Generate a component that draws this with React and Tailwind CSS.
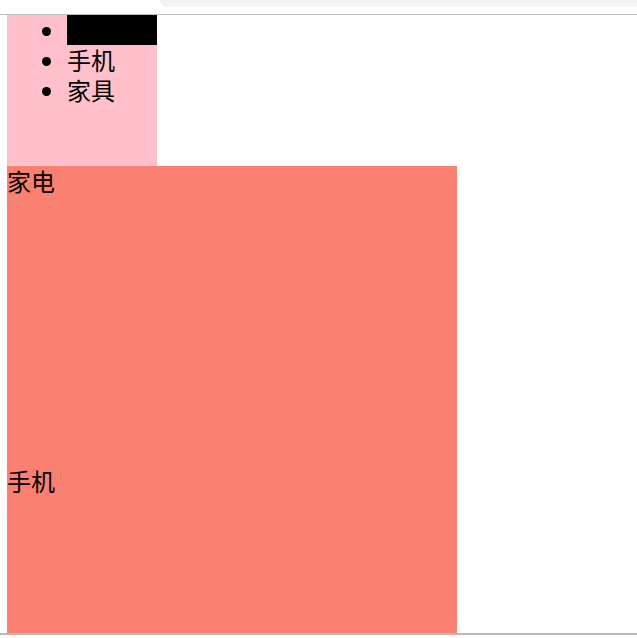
import React from 'react';

const navItems = ['家电', '手机', '家具'];

export default function App() {
  return (
    <div className="h-[638px] overflow-hidden bg-white flex flex-col" style={{ fontFamily: '"Noto Sans CJK SC", "Noto Sans", sans-serif' }}>
      {/* browser top strip */}
      <div className="h-[14px] shrink-0 flex">
        <div className="ml-[160px] h-[7px] flex-1 bg-[#f1f3f4] rounded-bl-[12px]" />
      </div>
      <div className="h-px shrink-0 bg-[#bdbdbd]" />

      {/* page */}
      <div className="flex-1 overflow-hidden pl-[7px] text-[24px] leading-[30px] text-black">
        <nav className="w-[150px] h-[151px] bg-[#ffc0cb]">
          <ul className="list-disc pl-[60px]">
            {navItems.map((item, i) => (
              <li key={item} className={i === 0 ? 'bg-black' : ''}>
                {item}
              </li>
            ))}
          </ul>
        </nav>
        <div className="w-[450px] bg-[#fa8072]">
          {navItems.map((item) => (
            <section key={item} className="h-[300px]">
              {item}
            </section>
          ))}
        </div>
      </div>

      {/* browser bottom edge */}
      <div className="h-[2px] shrink-0 bg-[#b8b8b8]" />
      <div className="h-[3px] shrink-0 bg-white" />
    </div>
  );
}
